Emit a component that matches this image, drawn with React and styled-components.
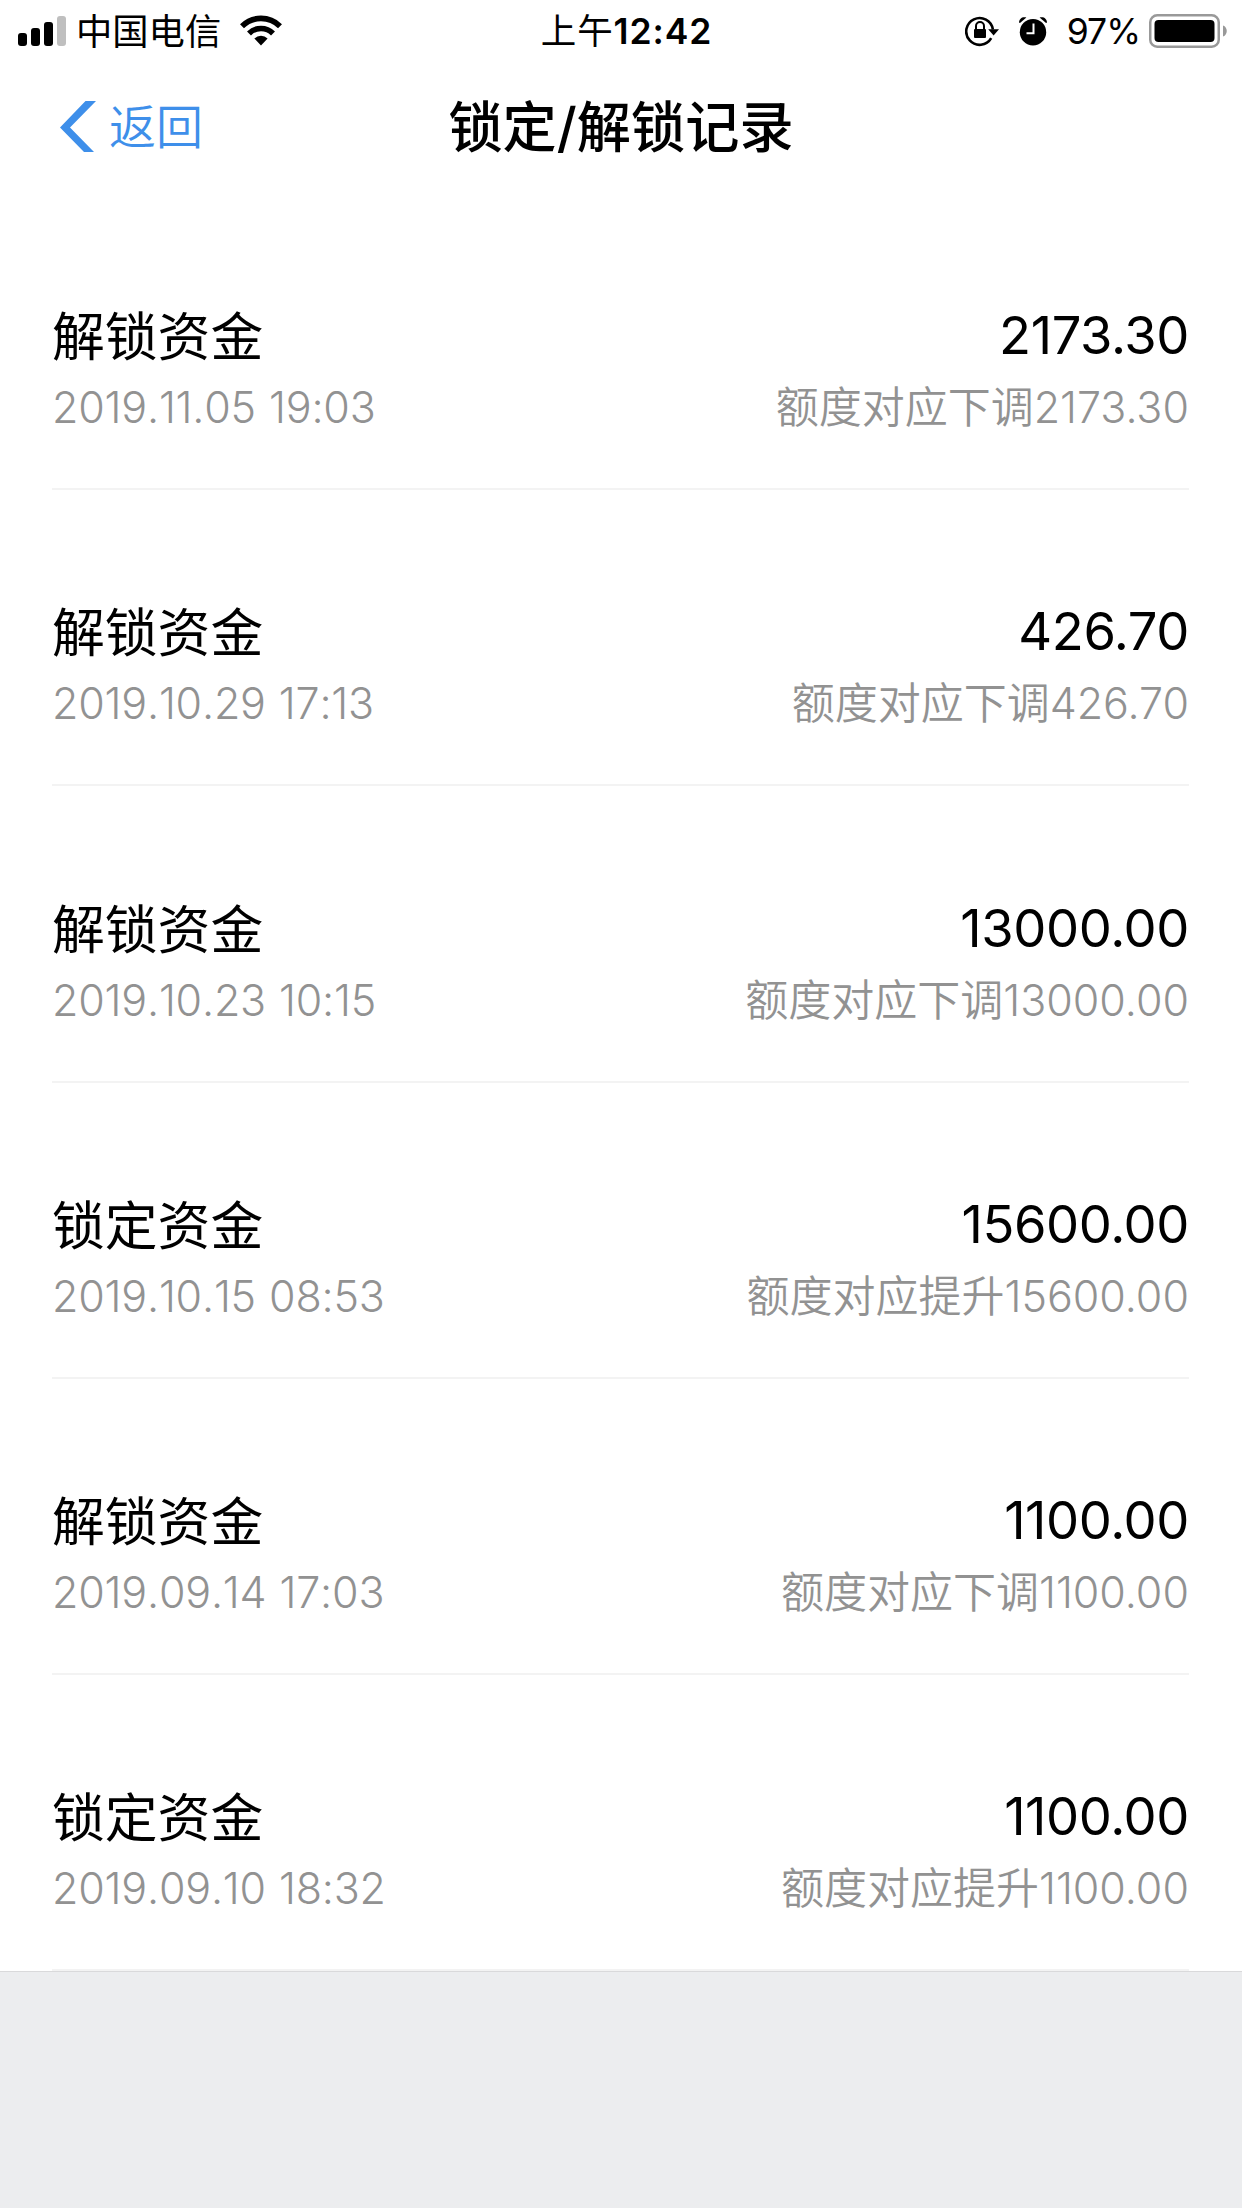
import React from "react";
import styled, { createGlobalStyle } from "styled-components";

const GlobalStyle = createGlobalStyle`
  * {
    box-sizing: border-box;
  }

  body {
    margin: 0;
    background-color: #ecedef;
    color: #000;
    font-family: Inter, "Noto Sans CJK SC", sans-serif;
  }
`;

const Page = styled.div`
  width: 1242px;
  height: 2208px;
  overflow: hidden;
  background-color: #ecedef;
`;

// Status bar
const StatusBar = styled.div`
  display: grid;
  grid-template-columns: 1fr auto 1fr;
  height: 60px;
  padding: 0 15px 0 18px;
  background-color: #fff;
  font-size: 36px;
  line-height: 60px;
  white-space: nowrap;
`;

const StatusLeft = styled.div`
  display: flex;
  align-items: center;
`;

const StatusRight = styled.div`
  display: flex;
  align-items: center;
  justify-content: flex-end;
`;

const StatusIcons = styled.div`
  display: flex;
  gap: 20px;
`;

const Carrier = styled.span`
  margin: 2px 19px 0 10px;
  font-size: 36.3px;
`;

const Time = styled.span`
  padding: 2px 0 0 8px;
  font-size: 35.5px;
  font-weight: 600;
  letter-spacing: 0.9px;
`;

const TimePrefix = styled.span`
  font-weight: 400;
`;

const Percent = styled.span`
  margin: 2px 9px 0 20px;
  font-size: 35.5px;
  font-weight: 400;
  letter-spacing: -1px;
`;

// Navigation bar
const NavBar = styled.header`
  display: grid;
  grid-template-columns: 1fr auto 1fr;
  align-items: center;
  height: 132px;
  padding: 0 56px;
  background-color: #fff;
`;

const BackButton = styled.button`
  display: flex;
  align-items: center;
  gap: 13px;
  padding: 0 0 0 4px;
  border: none;
  background: none;
  color: #3e8fea;
  font-family: inherit;
  font-size: 47px;
  font-weight: 350;
  line-height: 70px;
  cursor: pointer;
`;

const BackText = styled.span`
  padding-top: 1px;
`;

const NavTitle = styled.h1`
  margin: 0;
  padding-top: 2px;
  font-size: 54.2px;
  font-weight: 500;
  line-height: 70px;
`;

// Record list
const RecordList = styled.ul`
  margin: 0;
  padding: 2px 53px 0 52px;
  border-bottom: 1px solid #d9d9db;
  background-color: #fff;
  list-style: none;
`;

const Record = styled.li`
  display: flex;
  justify-content: space-between;
  height: 296.2px;
  padding-top: 104.3px;
  border-bottom: 2px solid #f3f3f3;
  white-space: nowrap;
`;

const Column = styled.div`
  display: flex;
  flex-direction: column;
  align-items: ${(props) => (props.$right ? "flex-end" : "flex-start")};
  gap: 5px;
`;

const Label = styled.div`
  margin: 2px 0 -2px;
  font-size: 52.8px;
  line-height: 74px;
`;

const Amount = styled.div`
  font-size: 52.5px;
  letter-spacing: -0.4px;
  line-height: 74px;
`;

const Sub = styled.div`
  color: #929292;
  font-size: 43px;
  font-weight: 350;
  line-height: 60px;
`;

const Stamp = styled(Sub)`
  font-kerning: none;
  letter-spacing: -0.2px;
  word-spacing: 1.2px;
`;

const SignalIcon = () => (
  <svg width="48" height="32" viewBox="0 0 48 32">
    <rect x="0" y="18" width="9" height="13" rx="3" />
    <rect x="13" y="13" width="9" height="18" rx="3" />
    <rect x="26" y="7" width="9" height="24" rx="3" />
    <rect x="39" y="1" width="9" height="30" rx="3" fill="#bfbfbf" />
  </svg>
);

const WifiIcon = () => (
  <svg width="42" height="32" viewBox="0 0 42 32">
    <g fill="none" stroke="#000" strokeWidth="5.6">
      <path d="M2 11.2A27 27 0 0 1 40 11.2" />
      <path d="M9 18.4A17 17 0 0 1 33 18.4" />
    </g>
    <path d="M14.4 23.4A9.5 9.5 0 0 1 27.6 23.4L21 30.4Z" />
  </svg>
);

const RotationLockIcon = () => (
  <svg width="34" height="32" viewBox="0 0 34 32">
    <path
      d="M27.9 14.5A13.4 13.4 0 1 0 26.2 23.2"
      fill="none"
      stroke="#000"
      strokeWidth="2.6"
    />
    <path d="M23.2 14.2H34L28.6 20.6Z" />
    <rect x="9" y="14" width="12" height="9" rx="1" />
    <path
      d="M11 15V11a4 4 0 0 1 8 0V15"
      fill="none"
      stroke="#000"
      strokeWidth="2"
    />
  </svg>
);

const AlarmIcon = () => (
  <svg width="28" height="32" viewBox="0 0 28 32">
    <circle cx="14" cy="17.2" r="13.2" />
    <path d="M0 7.6C.2 3.4 3.6 1.4 7.4 2.6L1 8Z" />
    <path d="M28 7.6C27.8 3.4 24.4 1.4 20.6 2.6L27 8Z" />
    <path
      d="M14.5 8.5V18.3H7.5"
      fill="none"
      stroke="#fff"
      strokeWidth="2"
    />
  </svg>
);

const BatteryIcon = () => (
  <svg width="78" height="34" viewBox="0 0 78 34">
    <rect
      x="1.25"
      y="1.25"
      width="68.5"
      height="31.5"
      rx="7"
      fill="none"
      stroke="#999"
      strokeWidth="2.5"
    />
    <rect x="5.5" y="6" width="60" height="22" rx="4" />
    <path d="M74 11.5C79 13 79 21 74 22.5Z" fill="#999" />
  </svg>
);

const BackIcon = () => (
  <svg width="36" height="51" viewBox="0 0 36 51">
    <path d="M25.5 0H36L10 26.5L34 51H24L0 26.5Z" fill="#3e8fea" />
  </svg>
);

const records = [
  { type: "解锁资金", time: "2019.11.05 19:03", amount: "2173.30", note: "额度对应下调" },
  { type: "解锁资金", time: "2019.10.29 17:13", amount: "426.70", note: "额度对应下调" },
  { type: "解锁资金", time: "2019.10.23 10:15", amount: "13000.00", note: "额度对应下调" },
  { type: "锁定资金", time: "2019.10.15 08:53", amount: "15600.00", note: "额度对应提升" },
  { type: "解锁资金", time: "2019.09.14 17:03", amount: "1100.00", note: "额度对应下调" },
  { type: "锁定资金", time: "2019.09.10 18:32", amount: "1100.00", note: "额度对应提升" },
];

const App = () => {
  return (
    <>
      <GlobalStyle />
      <Page>
        <StatusBar>
          <StatusLeft>
            <SignalIcon />
            <Carrier>中国电信</Carrier>
            <WifiIcon />
          </StatusLeft>
          <Time>
            <TimePrefix>上午</TimePrefix>12:42
          </Time>
          <StatusRight>
            <StatusIcons>
              <RotationLockIcon />
              <AlarmIcon />
            </StatusIcons>
            <Percent>97%</Percent>
            <BatteryIcon />
          </StatusRight>
        </StatusBar>
        <NavBar>
          <BackButton>
            <BackIcon />
            <BackText>返回</BackText>
          </BackButton>
          <NavTitle>锁定/解锁记录</NavTitle>
        </NavBar>
        <RecordList>
          {records.map((record, index) => (
            <Record key={index}>
              <Column>
                <Label>{record.type}</Label>
                <Stamp>{record.time}</Stamp>
              </Column>
              <Column $right>
                <Amount>{record.amount}</Amount>
                <Sub>
                  {record.note}
                  {record.amount}
                </Sub>
              </Column>
            </Record>
          ))}
        </RecordList>
      </Page>
    </>
  );
};

export default App;
